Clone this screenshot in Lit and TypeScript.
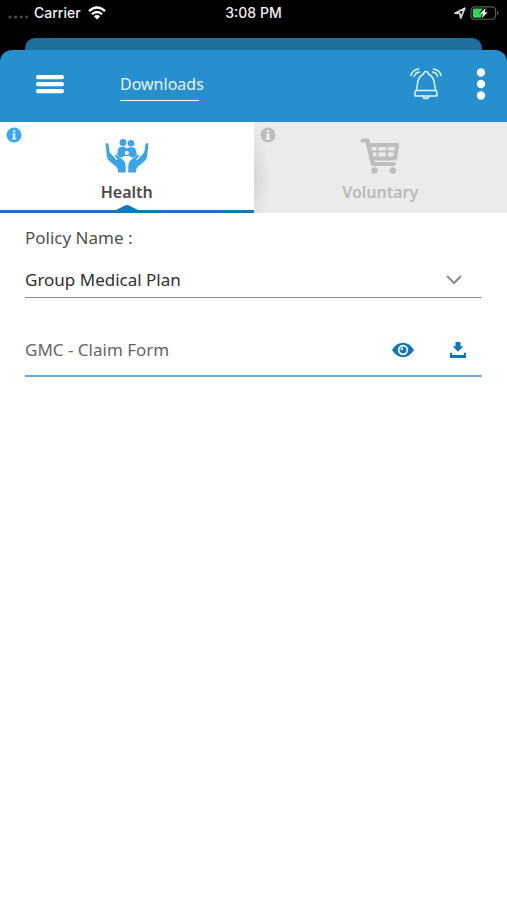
import { LitElement, html, css, svg } from "lit";
import { customElement, state } from "lit/decorators.js";
import { classMap } from "lit/directives/class-map.js";

@customElement("status-bar")
class StatusBar extends LitElement {
  static styles = css`
    :host {
      display: grid;
      grid-template-columns: 1fr auto 1fr;
      align-items: center;
      height: 26px;
      padding: 0 8px;
      background: #000;
      color: #f2f2f2;
      font: 500 14px/20px Inter, "Liberation Sans", sans-serif;
    }
    .side {
      display: flex;
      align-items: center;
      gap: 6px;
    }
    .end {
      justify-content: flex-end;
      gap: 4px;
    }
    svg {
      display: block;
    }
  `;

  render() {
    return html`
      <div class="side">
        <svg width="20" height="16" viewBox="0 0 20 16" fill="#4c4c4c" aria-hidden="true">
          <circle cx="2" cy="12" r="1.6" /><circle cx="7.6" cy="12" r="1.6" />
          <circle cx="13.2" cy="12" r="1.6" /><circle cx="18.6" cy="12" r="1.4" />
        </svg>
        <span>Carrier</span>
        <svg width="20" height="14" viewBox="0 0 18 14" aria-hidden="true">
          <g fill="none" stroke="#fff" stroke-width="2.3">
            <path d="M1 5.2Q9-2.2 17 5.2" /><path d="M3.9 8.2Q9 3.7 14.1 8.2" />
          </g>
          <path d="M5.8 10.3Q9 7.7 12.2 10.3L9 13.6Z" fill="#fff" />
        </svg>
      </div>
      <span>3:08 PM</span>
      <div class="side end">
        <svg width="12" height="12" viewBox="0 0 12 12" aria-hidden="true">
          <path d="M1 6.2 10.8 1.2 6.8 11 5.9 6.4Z" fill="none" stroke="#ddd" stroke-width="1.7" stroke-linejoin="round" />
        </svg>
        <svg width="29" height="14" viewBox="0 0 29 14" aria-hidden="true">
          <rect x="1" y=".9" width="24.6" height="12.4" rx="3.6" fill="none" stroke="#606060" stroke-width="1.1" />
          <path d="M4.5 2.6H13L9 7.7H12L11 11.7H4.5Q2.8 11.7 2.8 10V4.3Q2.8 2.6 4.5 2.6Z" fill="#35d35c" />
          <path d="M15.6 2 9.8 7.8H12.9L11.8 12.3 17.6 6.3H14.6Z" fill="#fff" />
          <path d="M27 5Q28.5 5.5 28.5 7.1T27 9.2Z" fill="#606060" />
        </svg>
      </div>
    `;
  }
}

@customElement("app-header")
class AppHeader extends LitElement {
  static styles = css`
    :host {
      display: block;
      padding-top: 12px;
      background: #000;
    }
    .behind {
      height: 12px;
      margin: 0 25px;
      border-radius: 10px 10px 0 0;
      background: #20709f;
    }
    header {
      display: flex;
      align-items: center;
      height: 72px;
      box-sizing: border-box;
      padding: 0 17px 4px 36px;
      border-radius: 12px 12px 0 0;
      background: #268fcd;
    }
    button {
      padding: 0;
      border: 0;
      background: none;
      cursor: pointer;
    }
    svg {
      display: block;
    }
    h1 {
      margin: 4px auto 0 56px;
      padding-bottom: 4px;
      border-bottom: 1px solid #fff;
      width: 79px;
      white-space: nowrap;
      color: #e9f6ff;
      font: 400 16px/24px "Noto Sans", sans-serif;
    }
    .more {
      margin-left: 30px;
    }
  `;

  render() {
    return html`
      <div class="behind"></div>
      <header>
        <button aria-label="Menu">
          <svg width="28" height="20" viewBox="0 0 28 20" fill="#fff">
            <rect y="1" width="28" height="4.3" rx="2" />
            <rect y="8" width="28" height="4.3" rx="2" />
            <rect y="15" width="28" height="4.3" rx="2" />
          </svg>
        </button>
        <h1>Downloads</h1>
        <button aria-label="Notifications">
          <svg width="32" height="34" viewBox="0 0 32 34" fill="none" stroke="#e4f6ff" stroke-width="1.5" stroke-linecap="round" stroke-linejoin="round">
            <path d="M13.6 7Q14 4.6 16 4.6T18.400 7Q24 9.500 24.600 17.500Q24.900 22.500 27 25.500V29H5V25.500Q7.100 22.500 7.400 17.500Q8 9.500 13.600 7Z" />
            <path d="M6.500 23.600H25.500M13 29Q13.500 31.600 16 31.600T19 29" />
            <path d="M8.500 2Q2.500 2.800 1 8.500M9.500 5Q5.500 5.500 4.300 9.300M23.500 2Q29.500 2.800 31 8.500M22.500 5Q26.500 5.500 27.700 9.300" />
          </svg>
        </button>
        <button class="more" aria-label="More options">
          <svg width="18" height="34" viewBox="0 0 18 34" fill="#fff">
            <circle cx="9" cy="5.500" r="4.200" /><circle cx="9" cy="17" r="4.200" /><circle cx="9" cy="28.500" r="4.200" />
          </svg>
        </button>
      </header>
    `;
  }
}

const healthIcon = svg`
  <svg width="44" height="36" viewBox="0 0 44 36" fill="#3ba3e8" aria-hidden="true">
    <circle cx="18" cy="4.400" r="3.500" /><circle cx="26" cy="5.200" r="3.300" />
    <path d="M12 17 13 11.500Q13.500 8.800 16 8.800H19.500L22 10.500 24.500 9.300H27.500Q30.200 9.300 30.800 12L32 17 28.500 19.500H15.500Z" />
    <circle cx="21.900" cy="15" r="2.100" fill="#fff" />
    <path d="M17.800 20V18.900Q18.300 17.900 20 17.900H24Q25.500 17.900 26 18.900V20Z" fill="#fff" />
    <path d="M.6 6.500Q.8 4.800 2.300 5.200 3.500 5.600 3.700 7.500L4.800 14.500 12 22.200 12.800 21.500 9.600 17.800Q10.800 16.300 13 18L18.500 22.200Q20.700 24.300 20.700 28.500V34.500H13.200Q13.200 30.500 11.500 29L4.500 23.300Q2.200 21.400 1.900 18.500Z" />
    <path d="M43.400 6.500Q43.200 4.800 41.700 5.200 40.500 5.600 40.300 7.500L39.200 14.500 32 22.200 31.200 21.500 34.400 17.800Q33.200 16.300 31 18L25.500 22.200Q23.300 24.300 23.300 28.500V34.500H30.800Q30.800 30.500 32.500 29L39.500 23.300Q41.800 21.400 42.100 18.500Z" />
  </svg>`;

const cartIcon = svg`
  <svg width="44" height="36" viewBox="0 0 44 36" fill="none" stroke="#bdbdbd" aria-hidden="true">
    <path d="M4.500 2.500H9.500L15 26H36" stroke-width="4" stroke-linecap="round" stroke-linejoin="round" />
    <path d="M10.500 7H39.300L37 20.500H13.500Z" stroke-width="4" stroke-linejoin="round" />
    <path d="M12 13.600H38M19.500 7V20M28.800 7V20" stroke-width="2" />
    <circle cx="16.500" cy="32.500" r="3.200" fill="#bdbdbd" stroke="none" />
    <circle cx="34.800" cy="32.500" r="3.200" fill="#bdbdbd" stroke="none" />
  </svg>`;

const tabs = [
  { id: "health", label: "Health", icon: healthIcon },
  { id: "voluntary", label: "Voluntary", icon: cartIcon },
];

@customElement("plan-tabs")
class PlanTabs extends LitElement {
  @state() private selected = "health";

  static styles = css`
    :host {
      display: block;
    }
    .tabs {
      display: grid;
      grid-template-columns: 1fr 1fr;
    }
    .tab {
      position: relative;
      display: flex;
      flex-direction: column;
      align-items: center;
      height: 91px;
      padding: 16px 0 0;
      border: 0;
      border-bottom: 3px solid transparent;
      background: radial-gradient(ellipse 16px 52px at 0 56px, #d6d6d6, #ebebeb);
      background-origin: border-box;
      color: #b9b9b9;
      font: 600 16px/24px "Noto Sans", sans-serif;
      cursor: pointer;
    }
    .tab.active {
      border-bottom-color: #1278b9;
      background: #fff;
      color: #4a4a4a;
    }
    .label {
      margin-top: 6px;
    }
    .info {
      position: absolute;
      left: 6px;
      top: 5px;
      color: #bcbcbc;
    }
    .active .info {
      color: #35aaf3;
    }
    .pointer {
      position: absolute;
      bottom: 0;
      left: 50%;
      margin-left: -11px;
    }
    svg {
      display: block;
    }
  `;

  render() {
    return html`
      <div class="tabs" role="tablist">
        ${tabs.map((t) => {
          const active = t.id === this.selected;
          return html`
            <button
              role="tab"
              aria-selected=${active ? "true" : "false"}
              class=${classMap({ tab: true, active })}
              @click=${() => (this.selected = t.id)}
            >
              <svg class="info" width="16" height="16" viewBox="0 0 16 16" aria-hidden="true">
                <circle cx="8" cy="8" r="7.500" fill="currentColor" />
                <path d="M7 3.300H9.300V5.300H7ZM6 6.500H9.300V11H10.300V12.400H5.900V11H7V7.800H6Z" fill="#fff" fill-opacity=".85" />
              </svg>
              ${t.icon}
              <span class="label">${t.label}</span>
              ${active
                ? html`<svg class="pointer" width="22" height="5" viewBox="0 0 22 5" aria-hidden="true">
                    <path d="M0 5 9 .6Q11-.4 13 .6L22 5Z" fill="#1278b9" />
                  </svg>`
                : ""}
            </button>
          `;
        })}
      </div>
    `;
  }
}

@customElement("app-root")
class AppRoot extends LitElement {
  static styles = css`
    :host {
      display: block;
      min-height: 100vh;
      background: #fff;
      color: #505050;
      font: 400 17px/24px "Noto Sans", sans-serif;
    }
    main {
      padding: 13px 25px;
    }
    label {
      display: block;
    }
    .picker {
      display: grid;
      align-items: center;
      margin-top: 13px;
      border-bottom: 1px solid #8c8c8c;
    }
    select,
    .chevron {
      grid-area: 1 / 1;
    }
    select {
      appearance: none;
      width: 100%;
      height: 34px;
      padding: 0;
      border: 0;
      background: none;
      color: #303030;
      font: inherit;
    }
    .chevron {
      justify-self: end;
      margin-right: 19px;
      pointer-events: none;
    }
    ul {
      margin: 26px 0 0;
      padding: 0;
      list-style: none;
    }
    li {
      display: flex;
      align-items: center;
      height: 51px;
      border-bottom: 2px solid #6dafdb;
      color: #666;
    }
    .name {
      flex: 1;
    }
    button {
      padding: 0;
      border: 0;
      background: none;
      cursor: pointer;
    }
    .download {
      margin: 0 16px 0 36px;
    }
    svg {
      display: block;
    }
  `;

  render() {
    return html`
      <status-bar></status-bar>
      <app-header></app-header>
      <plan-tabs></plan-tabs>
      <main>
        <label for="policy">Policy Name :</label>
        <div class="picker">
          <select id="policy">
            <option>Group Medical Plan</option>
          </select>
          <svg class="chevron" width="18" height="12" viewBox="0 0 18 12" aria-hidden="true">
            <path d="M2 2 9 9 16 2" fill="none" stroke="#8c8c8c" stroke-width="2.200" />
          </svg>
        </div>
        <ul>
          <li>
            <span class="name">GMC - Claim Form</span>
            <button aria-label="View GMC - Claim Form">
              <svg width="22" height="16" viewBox="0 0 22 16">
                <path d="M0 8Q4.500.7 11 .7T22 8Q17.500 15.300 11 15.300T0 8Z" fill="#0f77bb" />
                <circle cx="11" cy="8" r="4.300" fill="none" stroke="#fff" stroke-width="1.700" />
                <path d="M11 7.800V5.200A2.800 2.800 0 0 0 8.400 7.800Z" fill="#fff" />
              </svg>
            </button>
            <button class="download" aria-label="Download GMC - Claim Form">
              <svg width="16" height="18" viewBox="0 0 16 18" fill="#0f77bb">
                <path d="M5.500 1H10.500V5.300H13.300L8 10.700 2.700 5.300H5.500Z" />
                <path d="M0 11.800H2.200V13.900H13.800V11.800H16V17H0Z" />
              </svg>
            </button>
          </li>
        </ul>
      </main>
    `;
  }
}
